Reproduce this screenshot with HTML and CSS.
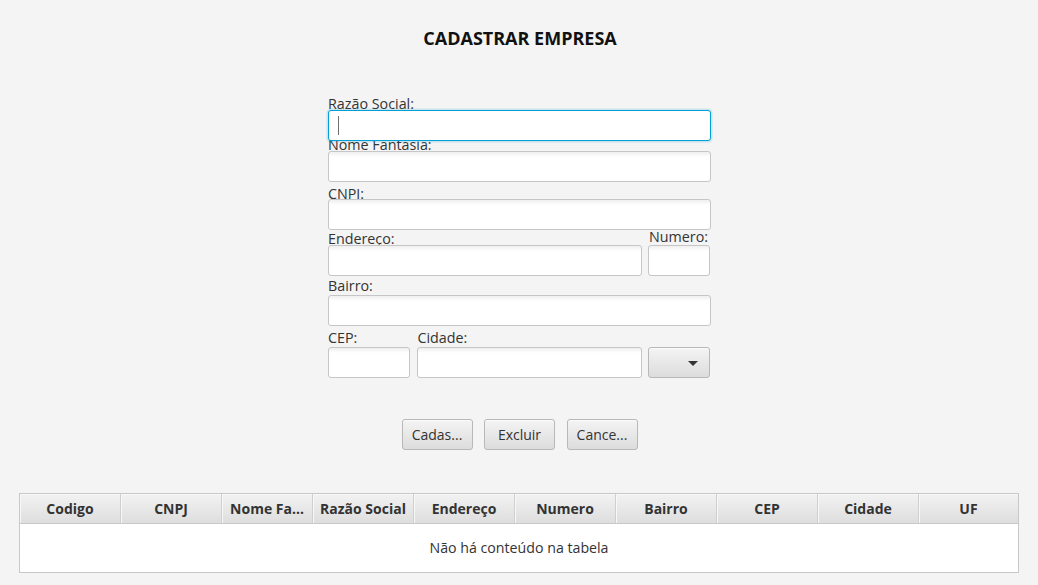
FILE: index.html
```html
<!DOCTYPE html>
<html lang="pt">
<head>
<meta charset="utf-8">
<title>Cadastrar Empresa</title>
<link rel="stylesheet" href="styles.css">
</head>
<body>
<h1 class="title">CADASTRAR EMPRESA</h1>
<div class="form">
  <div class="lbl lbl-1"><span>Razão Social:</span></div>
  <div class="field focused"><span class="caret"></span></div>
  <div class="lbl lbl-2"><span>Nome Fantasia:</span></div>
  <div class="field"></div>
  <div class="lbl lbl-3"><span>CNPJ:</span></div>
  <div class="field"></div>
  <div class="row row-addr">
    <div class="col">
      <div class="lbl lbl-4"><span>Endereço:</span></div>
      <div class="field"></div>
    </div>
    <div class="col">
      <div class="lbl lbl-4 lbl-right"><span>Numero:</span></div>
      <div class="field"></div>
    </div>
  </div>
  <div class="lbl lbl-5"><span>Bairro:</span></div>
  <div class="field"></div>
  <div class="row row-city">
    <div class="col">
      <div class="lbl lbl-6"><span>CEP:</span></div>
      <div class="field"></div>
    </div>
    <div class="col">
      <div class="lbl lbl-6 lbl-city"><span>Cidade:</span></div>
      <div class="field"></div>
    </div>
    <div class="col">
      <div class="lbl lbl-6"></div>
      <div class="combo"><span class="arrow"></span></div>
    </div>
  </div>
</div>
<div class="buttons">
  <div class="btn">Cadas...</div>
  <div class="btn">Excluir</div>
  <div class="btn">Cance...</div>
</div>
<div class="table">
  <div class="thead">
    <div class="th w101">Codigo</div>
    <div class="th w101">CNPJ</div>
    <div class="th w91">Nome Fa...</div>
    <div class="th w101">Razão Social</div>
    <div class="th w101">Endereço</div>
    <div class="th w101">Numero</div>
    <div class="th w101">Bairro</div>
    <div class="th w101">CEP</div>
    <div class="th w101">Cidade</div>
    <div class="th wlast">UF</div>
  </div>
  <div class="tbody">Não há conteúdo na tabela</div>
</div>
</body>
</html>
```

FILE: styles.css
```css
html, body {
  margin: 0;
  padding: 0;
}
body {
  width: 1038px;
  height: 585px;
  overflow: hidden;
  background: #f4f4f4;
  font-family: "Open Sans", "Noto Sans", sans-serif;
  color: #333333;
}
.title {
  margin: 26px 0 0 0;
  height: 24px;
  line-height: 24px;
  font-size: 18px;
  font-weight: 700;
  text-align: center;
  color: #111111;
  padding-left: 2px;
}
.form {
  width: 383px;
  margin: 42px auto 0 auto;
  padding-left: 1px;
}
.lbl {
  display: flex;
  align-items: flex-end;
  line-height: 16px;
  font-size: 14.3px;
  color: #333333;
  white-space: nowrap;
}
.lbl-1 { height: 18px; }
.lbl-1 span { margin-bottom: -2px; }
.lbl-2 { height: 10px; }
.lbl-2 span { margin-bottom: -1.5px; }
.lbl-3 { height: 17px; }
.lbl-3 span { margin-bottom: -2.5px; }
.lbl-4 { height: 15px; }
.lbl-4 span { margin-bottom: -1.5px; }
.lbl-right { justify-content: flex-end; }
.lbl-right span { margin-bottom: 0px; padding-right: 2px; }
.lbl-5 { height: 19px; }
.lbl-5 span { margin-bottom: 1px; }
.lbl-6 { height: 21px; }
.lbl-6 span { margin-bottom: 1.5px; }
.lbl-city span { padding-left: 1px; }
.field {
  box-sizing: border-box;
  height: 31px;
  border: 1px solid #c6c6c6;
  border-radius: 3px;
  background: linear-gradient(to bottom, #efefef 0px, #ffffff 5px);
  position: relative;
}
.field.focused {
  border-color: #039ed3;
  box-shadow: 0 0 0 1.5px rgba(3, 158, 211, 0.18);
  background: #ffffff;
}
.caret {
  position: absolute;
  left: 9px;
  top: 5px;
  width: 1px;
  height: 19px;
  background: #707070;
}
.row {
  display: grid;
}
.row-addr {
  grid-template-columns: 314px 62px;
  column-gap: 6px;
}
.row-city {
  grid-template-columns: 82px 225px 62px;
  column-gap: 6.5px;
}
.combo {
  box-sizing: border-box;
  height: 31px;
  border: 1px solid #b8b8b8;
  border-radius: 3px;
  background: linear-gradient(to bottom, #f4f4f4, #dcdcdc);
  box-shadow: inset 0 1px 0 #fafafa;
  position: relative;
}
.arrow {
  position: absolute;
  right: 11px;
  top: 13px;
  width: 0;
  height: 0;
  border-left: 5px solid transparent;
  border-right: 5px solid transparent;
  border-top: 5px solid #333333;
}
.buttons {
  display: flex;
  justify-content: center;
  gap: 11.5px;
  margin-top: 41px;
  padding-left: 1px;
}
.btn {
  box-sizing: border-box;
  width: 71px;
  height: 31px;
  border: 1px solid #b8b8b8;
  border-radius: 3px;
  background: linear-gradient(to bottom, #f4f4f4, #dcdcdc);
  box-shadow: inset 0 1px 0 #fafafa;
  font-size: 14px;
  line-height: 29px;
  text-align: center;
  color: #333333;
}
.table {
  box-sizing: border-box;
  margin: 43px 19px 0 19px;
  height: 80px;
  border: 1px solid #c8c8c8;
  background: #ffffff;
}
.thead {
  display: flex;
  box-sizing: border-box;
  height: 30px;
  border-bottom: 1px solid #c8c8c8;
}
.th {
  box-sizing: border-box;
  height: 29px;
  background: linear-gradient(to bottom, #f2f2f2, #dedede);
  border-right: 1px solid #cfcfcf;
  box-shadow: inset 1px 1px 0 #f8f8f8;
  font-size: 14px;
  font-weight: 700;
  line-height: 29px;
  text-align: center;
  color: #333333;
  white-space: nowrap;
  overflow: hidden;
}
.w101 { width: 101px; }
.w91 { width: 91px; }
.wlast { flex: 1; border-right: none; }
.tbody {
  height: 48px;
  line-height: 48px;
  text-align: center;
  font-size: 14.2px;
  color: #333333;
}
```
